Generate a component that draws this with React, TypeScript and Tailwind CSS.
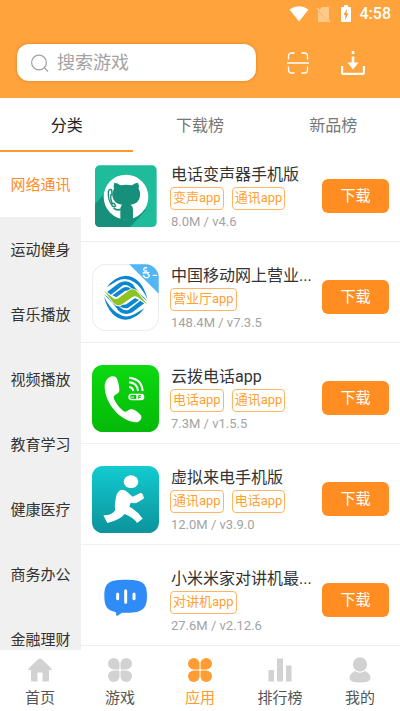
import React, { useState } from "react";

interface AppItem {
  name: string;
  tags: string[];
  size: string;
  version: string;
  icon: React.ReactNode;
}

const OctocatIcon = () => (
  <svg viewBox="21 24 201 201" className="w-full h-full" aria-hidden="true">
    <rect x="30" y="31" width="185" height="185" rx="14" fill="#1fbc9c" />
    <path d="M76 98L30 146V202Q30 216 44 216H136L182 166Z" fill="#16907a" />
    <circle cx="123" cy="126" r="67" fill="#fff" />
    <path
      d="M88 83Q98 84 106 91Q123 87 141 91Q149 84 159 83Q163 91 161 101Q167 110 165 122Q163 146 137 149Q144 154 144 164V191Q124 197 106 191V164Q106 154 111 149Q85 146 82 122Q81 110 87 101Q85 91 88 83Z"
      fill="#16907a"
    />
    <path d="M77 103Q71 103 70 110Q68 132 80 150Q86 158 92 153L87 145L82 146Q76 133 77 120L81 119L80 104Z" fill="none" stroke="#16907a" strokeWidth="4" />
    <path d="M86 158Q94 168 108 163" fill="none" stroke="#16907a" strokeWidth="5" />
  </svg>
);

const MobileIcon = () => (
  <svg viewBox="0 0 201 201" className="w-full h-full" aria-hidden="true">
    <defs>
      <clipPath id="mobile-clip">
        <rect x="1" y="1" width="199" height="199" rx="40" />
      </clipPath>
      <g id="mobile-half" fill="#0c86d2">
        <path d="M44 70Q68 37 101 35Q149 38 166 104Q147 68 127 55Q101 37 75 51Z" />
        <path d="M45 84L81 57Q104 45 122 61Q136 82 166 111Q143 98 124 79Q109 60 93 64L57 92Z" />
        <path d="M61 94L93 71Q107 65 119 76L110 81Q104 78 98 82L73 100Z" />
      </g>
    </defs>
    <rect x="1" y="1" width="199" height="199" rx="40" fill="#fff" stroke="#e9e9e9" strokeWidth="3" />
    <g clipPath="url(#mobile-clip)">
      <path d="M111 0H201V90Z" fill="#52b5f5" />
      <g fill="none" stroke="#fff" strokeWidth="4">
        <path d="M165 12Q156 9 155 17Q157 24 166 20M152 27L172 26M154 33Q158 44 168 40Q177 34 166 30" />
        <path d="M182 34H195" />
      </g>
    </g>
    <use href="#mobile-half" />
    <use href="#mobile-half" transform="rotate(180 101 101)" />
    <path
      d="M36 80L64 103Q71 108 79 103L112 79Q124 71 136 83L166 122L137 99Q129 94 121 99L90 121Q77 129 65 117Z"
      fill="#8fc31f"
      stroke="#fff"
      strokeWidth="5"
      paintOrder="stroke"
    />
  </svg>
);

const PhoneIcon = () => (
  <svg viewBox="0 0 201 201" className="w-full h-full" aria-hidden="true">
    <defs>
      <linearGradient id="phone-bg" x1="0" y1="0" x2="0" y2="1">
        <stop offset="0" stopColor="#0cd90f" />
        <stop offset="1" stopColor="#04b908" />
      </linearGradient>
    </defs>
    <rect width="201" height="201" rx="32" fill="url(#phone-bg)" />
    <path
      d="M60 34C47 36 37 51 38 67C40 115 82 167 130 172C142 173 150 162 148 153C145 146 126 132 118 132C110 132 106 141 99 140C88 136 68 111 65 98C64 88 82 86 82 77C83 65 77 43 72 37Q67 33 60 34Z"
      fill="#fff"
    />
    <g fill="none" stroke="#fff" strokeWidth="6">
      <path d="M111 66Q122 67 124 78M111 52Q136 54 138 78M111 38Q149 41 152 78" />
      <rect x="111" y="88" width="44" height="16" rx="8" strokeWidth="4" />
      <path d="M117 94V100M123 94V100" strokeWidth="3" />
    </g>
    <path d="M133 87H148Q156 88 156 96T148 105H133Z" fill="#fff" />
    <path d="M140 101V92H147M140 97H146" fill="none" stroke="#08c50b" strokeWidth="3" />
  </svg>
);

const RunnerIcon = () => (
  <svg viewBox="0 0 201 201" className="w-full h-full" aria-hidden="true">
    <defs>
      <linearGradient id="runner-bg" x1="0" y1="0" x2="0" y2="1">
        <stop offset="0" stopColor="#12cbd0" />
        <stop offset="1" stopColor="#0c939b" />
      </linearGradient>
    </defs>
    <rect width="201" height="201" rx="32" fill="url(#runner-bg)" />
    <ellipse cx="117" cy="47" rx="22" ry="19" fill="#fff" />
    <path
      d="M84 73Q94 68 103 76L122 92L145 81Q151 80 153 87L156 97Q136 112 127 112L116 110L112 122Q137 135 152 158L135 171Q127 156 98 144Q82 163 46 171L34 148Q62 148 70 132Q67 122 70 105Q72 81 84 73Z"
      fill="#fff"
    />
  </svg>
);

const TalkIcon = () => (
  <svg viewBox="0 0 201 201" className="w-full h-full" aria-hidden="true">
    <path
      d="M100 38C150 38 165 46 165 86C165 127 149 136 108 137H90L74 148L71 135C45 130 37 117 37 86C37 46 53 38 100 38Z"
      fill="#2e8bf8"
    />
    <path d="M77 81V95M101 71V106M126 81V95" stroke="#fff" strokeWidth="9" strokeLinecap="round" />
  </svg>
);

const categories = ["网络通讯", "运动健身", "音乐播放", "视频播放", "教育学习", "健康医疗", "商务办公", "金融理财"];

const tabs = ["分类", "下载榜", "新品榜"];

const apps: AppItem[] = [
  { name: "电话变声器手机版", tags: ["变声app", "通讯app"], size: "8.0M", version: "v4.6", icon: <OctocatIcon /> },
  { name: "中国移动网上营业...", tags: ["营业厅app"], size: "148.4M", version: "v7.3.5", icon: <MobileIcon /> },
  { name: "云拨电话app", tags: ["电话app", "通讯app"], size: "7.3M", version: "v1.5.5", icon: <PhoneIcon /> },
  { name: "虚拟来电手机版", tags: ["通讯app", "电话app"], size: "12.0M", version: "v3.9.0", icon: <RunnerIcon /> },
  { name: "小米米家对讲机最...", tags: ["对讲机app"], size: "27.6M", version: "v2.12.6", icon: <TalkIcon /> },
];

const petals = (
  <>
    <path d="M5.750 0A5.750 5.750 0 0 0 5.750 11.500H10.500Q11.500 11.500 11.500 10.500V5.750A5.750 5.750 0 0 0 5.750 0Z" />
    <path d="M18.250 0A5.750 5.750 0 0 1 18.250 11.500H13.500Q12.500 11.500 12.500 10.500V5.750A5.750 5.750 0 0 1 18.250 0Z" />
    <path d="M5.750 24A5.750 5.750 0 0 1 5.750 12.500H10.500Q11.500 12.500 11.500 13.500V18.250A5.750 5.750 0 0 1 5.750 24Z" />
    <path d="M18.250 24A5.750 5.750 0 0 0 18.250 12.500H13.500Q12.500 12.500 12.500 13.500V18.250A5.750 5.750 0 0 0 18.250 24Z" />
  </>
);

const navItems = [
  {
    label: "首页",
    icon: <path d="M12 0.500Q12.800 0.500 13.500 1.100L23.500 10.500Q24.500 12 23 12H21V22Q21 23.500 19.500 23.500H14.500V15.500Q14.500 14.500 13.500 14.500H10.500Q9.500 14.500 9.500 15.500V23.500H4.500Q3 23.500 3 22V12H1Q-0.500 12 0.500 10.500L10.500 1.100Q11.200 0.500 12 0.500Z" />,
  },
  { label: "游戏", icon: petals },
  { label: "应用", icon: petals },
  {
    label: "排行榜",
    icon: (
      <>
        <rect x="0.500" y="12" width="5.500" height="11.500" rx="0.600" />
        <rect x="9" y="0.500" width="6" height="23" rx="0.600" />
        <rect x="18" y="7.500" width="5.500" height="16" rx="0.600" />
      </>
    ),
  },
  {
    label: "我的",
    icon: (
      <>
        <ellipse cx="12" cy="6.500" rx="7" ry="7.200" />
        <path d="M7 13Q12 16.500 17 13Q22.500 15.500 22.500 20Q22.500 24.500 12 24.500Q1.500 24.500 1.500 20Q1.500 15.500 7 13Z" />
      </>
    ),
  },
];

const StatusBar = () => (
  <div className="flex items-center justify-end h-7 pr-[9px] text-white">
    <svg viewBox="0 0 20 16" className="w-5 h-4" fill="currentColor" aria-hidden="true">
      <path d="M0.500 3.500Q10-3 19.500 3.500L10 15.500Z" />
    </svg>
    <svg viewBox="0 0 16 17" className="w-4 h-[17px] ml-[7px]" aria-hidden="true">
      <path d="M6 1H12Q13 1 13 2V15L4 5V3ZM2 5L13 16H3Q2 16 2 15Z" fill="#ffc98c" />
      <path d="M1 2L14 16" stroke="#ffc98c" strokeWidth="1.500" />
    </svg>
    <svg viewBox="0 0 12 18" className="w-3 h-[18px] ml-2" aria-hidden="true">
      <path d="M4 0H8V2H10Q11 2 11 3V16Q11 17 10 17H2Q1 17 1 16V3Q1 2 2 2H4Z" fill="#fff" />
      <path d="M7 4L3.500 10H5.500L5 15L8.500 8.500H6.500Z" fill="#f59a35" />
    </svg>
    <span className="ml-2 text-base leading-none font-medium">4:58</span>
  </div>
);

export default function App() {
  const [activeTab, setActiveTab] = useState("分类");
  const [activeCategory, setActiveCategory] = useState("网络通讯");
  const [activeNav, setActiveNav] = useState("应用");
  const [keyword, setKeyword] = useState("");

  return (
    <div className="flex flex-col h-screen overflow-hidden bg-white font-['Roboto','Noto_Sans_CJK_SC',sans-serif]">
      <header className="shrink-0 bg-[#ffa33c] pb-[17px]">
        <StatusBar />
        <div className="flex items-center pl-[17px] pr-[35px] mt-4">
          <label className="flex flex-1 min-w-0 items-center gap-2 h-[37px] pl-[14px] pr-3 rounded-xl bg-white shadow-[0_0_3px_rgba(190,100,0,0.6)]">
            <svg viewBox="0 0 18 18" className="w-[18px] h-[18px] shrink-0" fill="none" stroke="#a3a3a3" strokeWidth="1.200" aria-hidden="true">
              <circle cx="8" cy="8.500" r="7.400" />
              <path d="M13.500 14L17 17.500" />
            </svg>
            <input
              type="text"
              name="keyword"
              aria-label="搜索游戏"
              value={keyword}
              onChange={(e) => setKeyword(e.target.value)}
              placeholder="搜索游戏"
              className="w-full min-w-0 text-lg leading-6 text-gray-700 placeholder:text-[#a3a3a3] focus:outline-none"
            />
          </label>
          <button type="button" aria-label="扫一扫" className="ml-[30px]">
            <svg viewBox="0 0 24 24" className="w-6 h-6" fill="none" stroke="#fff" strokeWidth="1.300">
              <path d="M2.500 8.500V5Q2.500 2 5.500 2H8.500M15.500 2H18.500Q21.500 2 21.500 5V8.500M2.500 15.500V19Q2.500 22 5.500 22H8.500M15.500 22H18.500Q21.500 22 21.500 19V15.500M1 12H23" />
            </svg>
          </button>
          <button type="button" aria-label="下载管理" className="ml-[31px]">
            <svg viewBox="0 0 24 24" className="w-6 h-6" fill="none" stroke="#fff" strokeWidth="2.200">
              <path d="M1.100 15V21.500Q1.100 22.900 2.500 22.900H21.500Q22.900 22.900 22.900 21.500V15" />
              <path d="M12 0V3M12 5.500V13" strokeWidth="2.600" />
              <path d="M6.500 11.500H17.500L12 18.500Z" fill="#fff" stroke="none" />
            </svg>
          </button>
        </div>
      </header>

      <div className="grid grid-cols-3 shrink-0" role="tablist">
        {tabs.map((tab) => (
          <button
            key={tab}
            type="button"
            role="tab"
            aria-selected={tab === activeTab}
            onClick={() => setActiveTab(tab)}
            className={`h-[54px] pt-1 border-b-2 text-base leading-6 ${
              tab === activeTab ? "border-[#ff9a2e] text-[#222222]" : "border-transparent text-[#777777]"
            }`}
          >
            {tab}
          </button>
        ))}
      </div>

      <div className="flex flex-1 min-h-0">
        <aside className="w-[81px] shrink-0 overflow-hidden bg-[#f0f0f0]">
          {categories.map((category) => (
            <button
              key={category}
              type="button"
              onClick={() => setActiveCategory(category)}
              className={`block w-full h-[65px] text-[15px] leading-6 ${
                category === activeCategory ? "bg-white text-[#ff8c1f]" : "text-[#333333]"
              }`}
            >
              {category}
            </button>
          ))}
        </aside>

        <ul className="flex flex-col flex-1 min-w-0 gap-[11px] overflow-hidden">
          {apps.map((app) => (
            <li key={app.name} className="flex items-start shrink-0 px-[11px] pt-[11px] pb-[9px] border-b border-[#f0f0f0]">
              <div className="w-[67px] h-[67px] shrink-0">{app.icon}</div>
              <div className="flex-1 min-w-0 ml-3 mr-2">
                <h2 className="text-base leading-6 text-[#333333] truncate">{app.name}</h2>
                <div className="flex gap-2 -ml-px">
                  {app.tags.map((tag) => (
                    <span
                      key={tag}
                      className="h-[23px] px-0.5 border border-[#ffb566] rounded text-[13px] leading-5 text-[#ffa033] whitespace-nowrap"
                    >
                      {tag}
                    </span>
                  ))}
                </div>
                <p className="mt-0.5 text-[13px] leading-5 text-[#a3a3a3]">
                  {app.size} / {app.version}
                </p>
              </div>
              <button type="button" className="w-[67px] h-[34px] mt-4 shrink-0 rounded-md bg-[#ff8d21] text-[15px] leading-6 text-white">
                下载
              </button>
            </li>
          ))}
        </ul>
      </div>

      <nav className="grid grid-cols-5 shrink-0 h-[61px] bg-white">
        {navItems.map((item) => (
          <a
            key={item.label}
            href="#"
            onClick={() => setActiveNav(item.label)}
            className={`flex flex-col items-center pt-2 ${item.label === activeNav ? "text-[#ff9a2e]" : "text-[#555555]"}`}
          >
            <svg
              viewBox="0 0 24 24"
              className={`w-6 h-6 overflow-visible ${item.label === activeNav ? "fill-[#ff9d32]" : "fill-[#d2d2d2]"}`}
              aria-hidden="true"
            >
              {item.icon}
            </svg>
            <span className="mt-1 text-[15px] leading-6">{item.label}</span>
          </a>
        ))}
      </nav>
    </div>
  );
}
